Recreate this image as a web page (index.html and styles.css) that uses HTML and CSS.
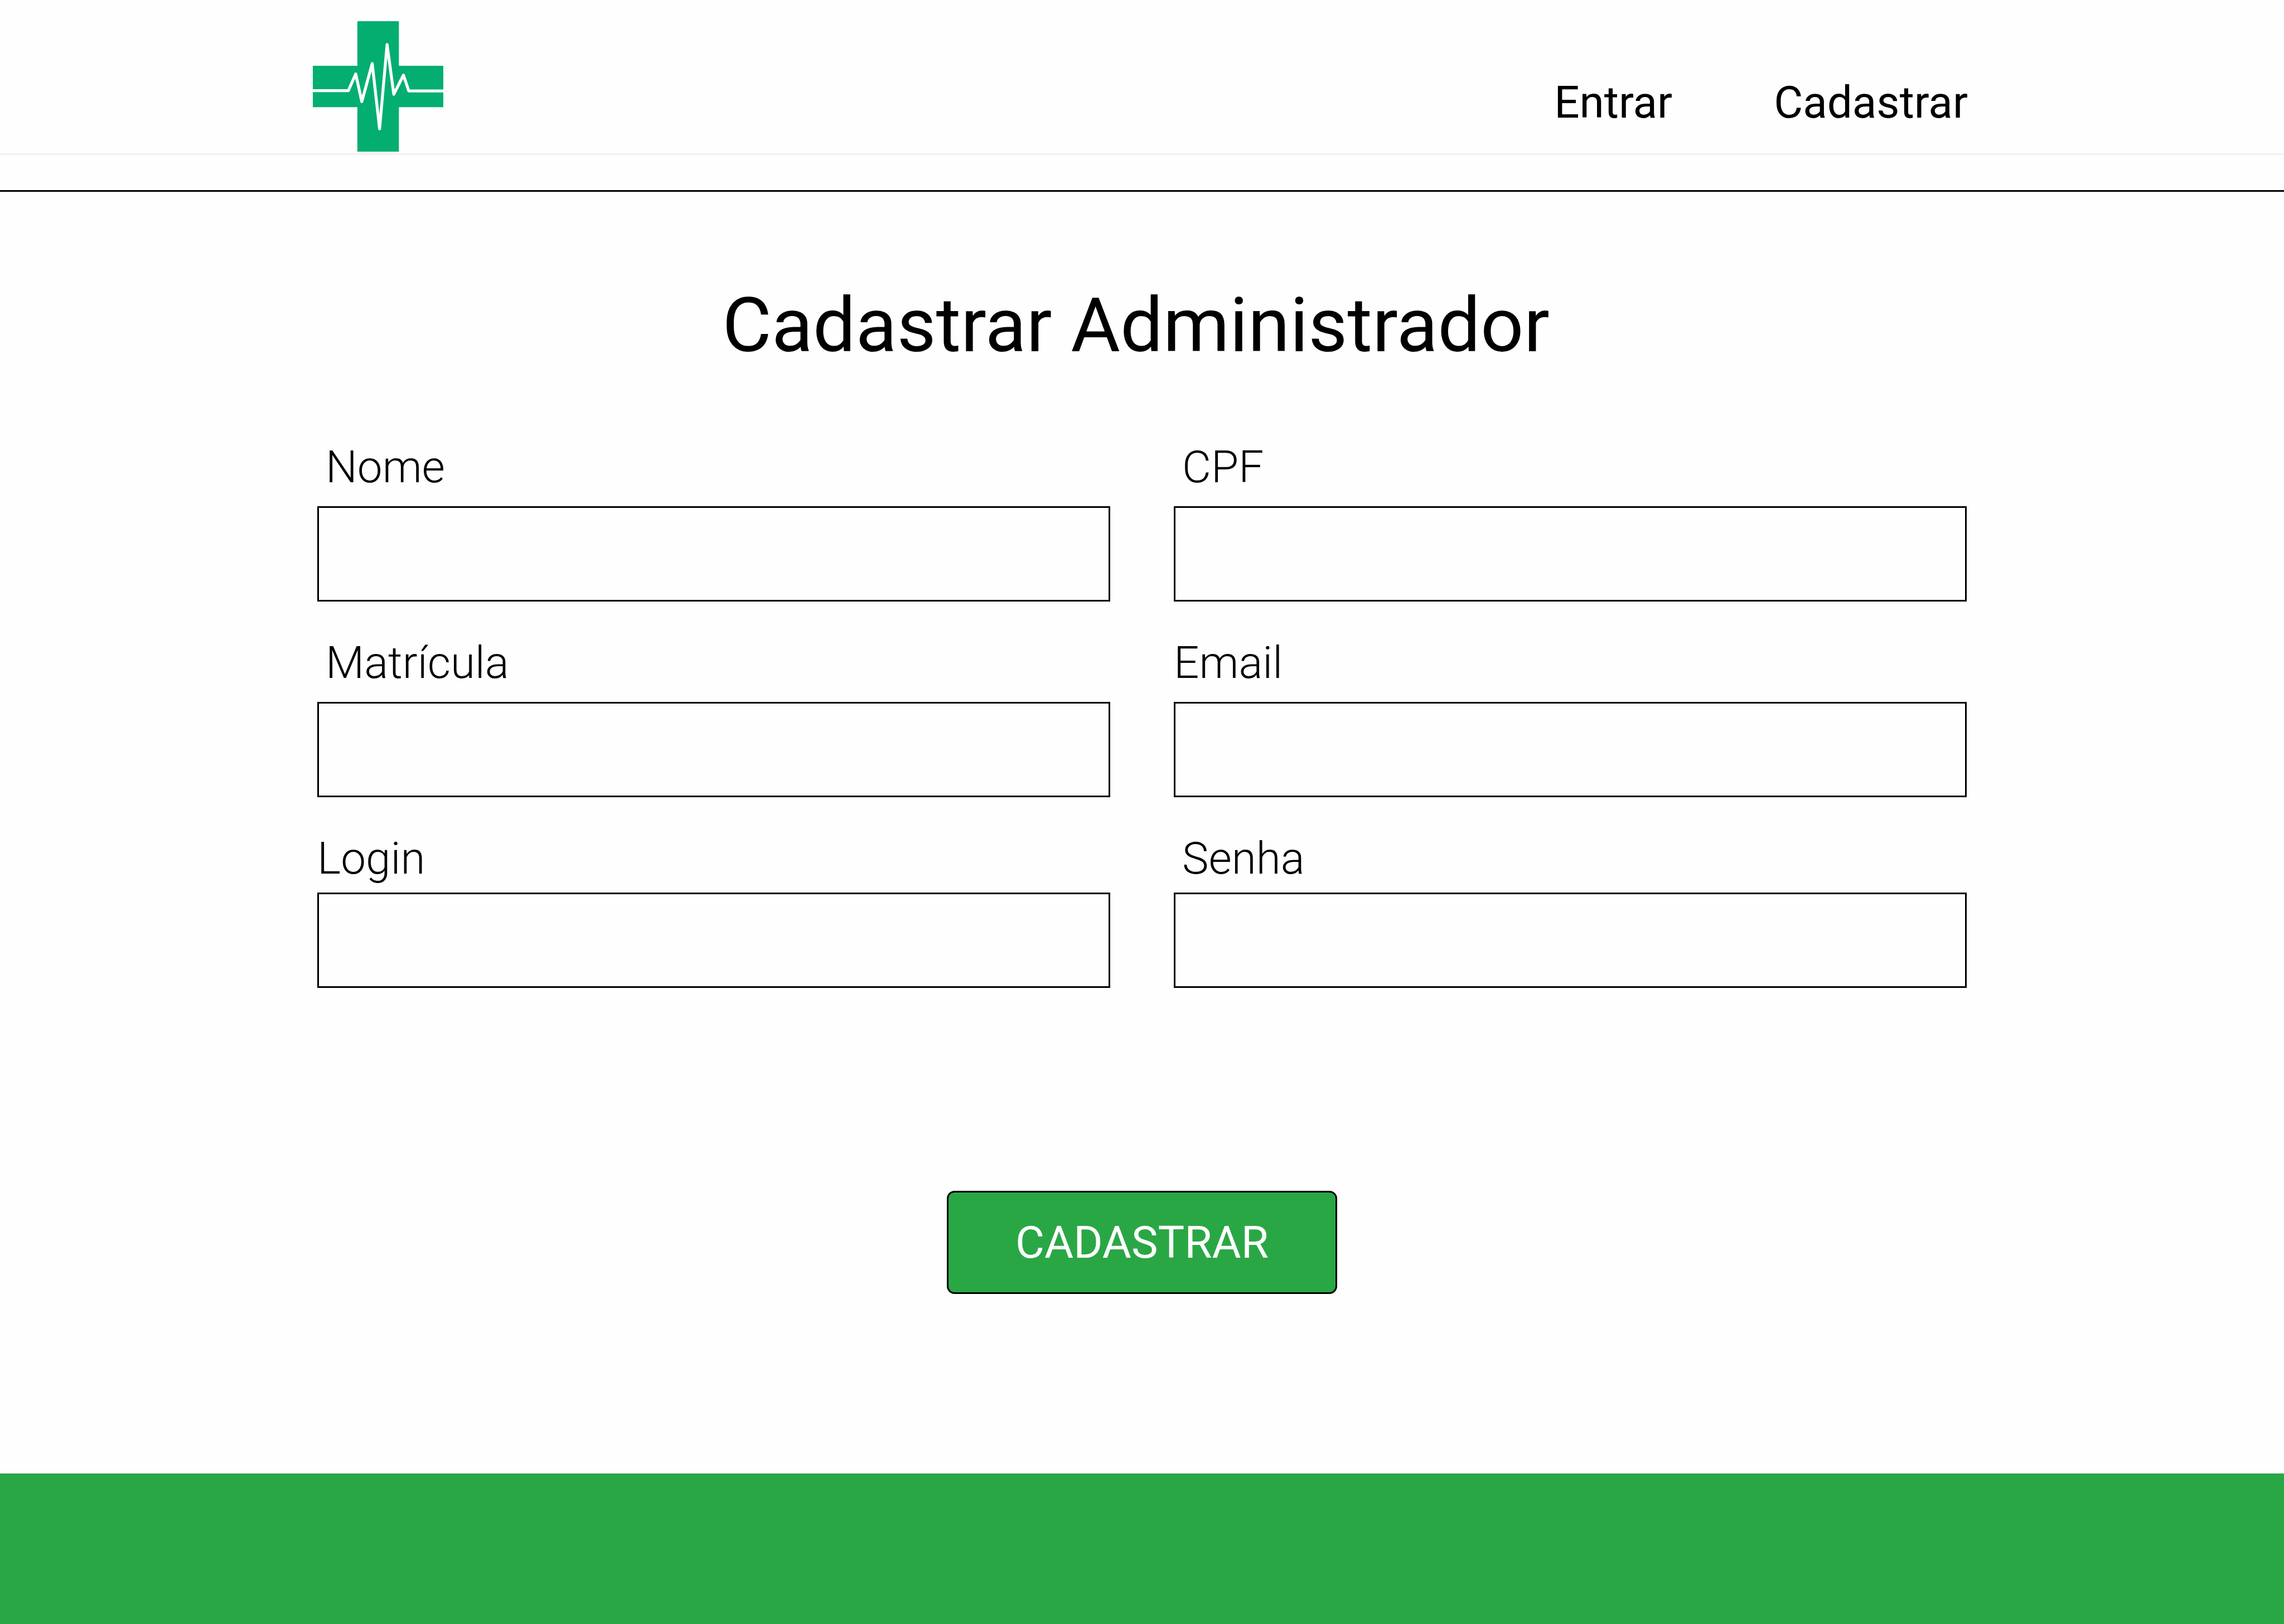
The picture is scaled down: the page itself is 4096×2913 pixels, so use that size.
FILE: index.html
```html
<!DOCTYPE html>
<html lang="pt-BR">
<head>
  <meta charset="utf-8">
  <meta name="viewport" content="width=device-width, initial-scale=1">
  <title>Cadastrar Administrador</title>
  <link rel="stylesheet" href="styles.css">
</head>
<body class="page">
  <header class="header">
    <a class="logo" href="#" aria-label="Início">
      <svg class="logo-mark" viewBox="125 78 1028 1028" aria-hidden="true">
        <path fill="#03ae70" d="M476 78H803V429H1153V756H803V1106H476V756H125V429H476Z"/>
        <path fill="none" stroke="#fff" stroke-width="23" stroke-linecap="round" stroke-linejoin="round" d="M110 625H405L463 494L511 712L593 412L651 926L710 262L763 654L839 503L881 628H1170"/>
      </svg>
    </a>
    <nav class="nav">
      <a class="nav-link" href="#">Entrar</a>
      <a class="nav-link" href="#">Cadastrar</a>
    </nav>
  </header>

  <main class="main">
    <h1 class="title">Cadastrar Administrador</h1>
    <form class="form">
      <div class="fields">
        <div class="field">
          <label class="label label-indent" for="nome">Nome</label>
          <input class="input" id="nome" type="text">
        </div>
        <div class="field">
          <label class="label label-indent" for="cpf">CPF</label>
          <input class="input" id="cpf" type="text">
        </div>
        <div class="field">
          <label class="label label-indent" for="matricula">Matrícula</label>
          <input class="input" id="matricula" type="text">
        </div>
        <div class="field">
          <label class="label" for="email">Email</label>
          <input class="input" id="email" type="email">
        </div>
        <div class="field field-compact">
          <label class="label" for="login">Login</label>
          <input class="input" id="login" type="text">
        </div>
        <div class="field field-compact">
          <label class="label label-indent" for="senha">Senha</label>
          <input class="input" id="senha" type="password">
        </div>
      </div>
      <button class="submit" type="submit">CADASTRAR</button>
    </form>
  </main>

  <footer class="footer"></footer>
</body>
</html>
```
FILE: styles.css
```css
* {
  box-sizing: border-box;
}

.page {
  display: flex;
  flex-direction: column;
  min-height: 100vh;
  margin: 0;
  background: #fefefe;
  color: #000;
  font-family: Roboto, "Liberation Sans", sans-serif;
  font-size: 80px;
  line-height: 94px;
}

.header {
  display: flex;
  justify-content: space-between;
  align-items: flex-end;
  padding: 38px 567px 4px 561px;
  border-bottom: 1px solid #ddd;
}

.logo,
.logo-mark {
  display: block;
}

.logo-mark {
  width: 234px;
  height: 234px;
}

.nav {
  display: flex;
  gap: 182px;
  padding-bottom: 41px;
}

.nav-link {
  color: inherit;
  text-decoration: none;
}

.main {
  margin-top: 64px;
  padding: 160px 569px 322px;
  border-top: 3px solid #000;
}

.title {
  margin: 0 0 127px;
  padding-right: 22px;
  font-size: 136px;
  font-weight: 400;
  line-height: 160px;
  text-align: center;
}

.form {
  display: flex;
  flex-direction: column;
  align-items: center;
  gap: 364px;
}

.fields {
  display: grid;
  grid-template-columns: 1fr 1fr;
  gap: 63px 114px;
  width: 100%;
}

.field {
  display: flex;
  flex-direction: column;
  gap: 23px;
}

.field-compact {
  gap: 14px;
}

.label {
  font-weight: 300;
}

.label-indent {
  padding-left: 15px;
}

.input {
  width: 100%;
  height: 171px;
  padding: 0 24px;
  border: 3px solid #000;
  border-radius: 0;
  background: transparent;
  color: inherit;
  font: inherit;
  font-weight: 300;
}

.submit {
  width: 700px;
  height: 185px;
  padding: 0;
  border: 3px solid #000;
  border-radius: 14px;
  background: #2aa745;
  color: #fff;
  font: inherit;
}

.footer {
  flex: 1;
  min-height: 270px;
  background: #2aa745;
}
```
